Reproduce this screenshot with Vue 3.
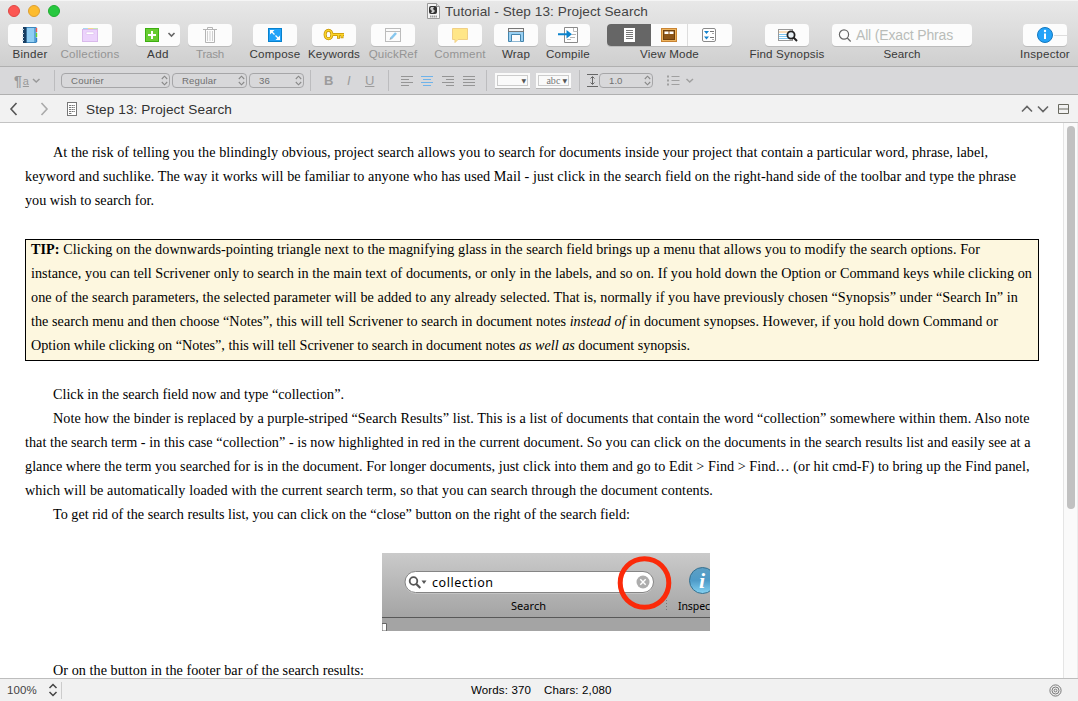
<script setup>
// Tracks a text run so that it spans a given width.
const vFit = {
  mounted(el, { value }) {
    if (!value) return
    const w = el.getBoundingClientRect().width
    el.style.letterSpacing = (value - w) / el.textContent.length + 'px'
  }
}

const tools = [
  { id: 'binder', label: 'Binder', gap: 8, w: 44, lw: 35 },
  { id: 'collections', label: 'Collections', gap: 16, w: 44, lw: 59, off: true },
  { id: 'add', label: 'Add', gap: 24, w: 44, lw: 22 },
  { id: 'trash', label: 'Trash', gap: 8, w: 44, lw: 28, off: true },
  { id: 'compose', label: 'Compose', gap: 21, w: 44, lw: 51 },
  { id: 'keywords', label: 'Keywords', gap: 15, w: 44, lw: 52 },
  { id: 'quickref', label: 'QuickRef', gap: 15, w: 44, lw: 48.5, off: true },
  { id: 'comment', label: 'Comment', gap: 23, w: 44, lw: 51.5, off: true },
  { id: 'wrap', label: 'Wrap', gap: 12, w: 44, lw: 28 },
  { id: 'compile', label: 'Compile', gap: 8, w: 44, lw: 44 },
  { id: 'view', label: 'View Mode', gap: 17, w: 125, lw: 59 },
  { id: 'find', label: 'Find Synopsis', gap: 33, w: 44, lw: 75 },
  { id: 'search', label: 'Search', gap: 23, w: 140, lw: 37 },
  { id: 'inspector', label: 'Inspector', gap: 51, w: 44, lw: 50 }
]

const intro = [
  { t: 'At the risk of telling you the blindingly obvious, project search allows you to search for documents inside your project that contain a particular word, phrase, label,', w: 935, indent: true },
  { t: 'keyword and suchlike. The way it works will be familiar to anyone who has used Mail - just click in the search field on the right-hand side of the toolbar and type the phrase', w: 991 },
  { t: 'you wish to search for.', w: 129 }
]
const tip = [
  { b: 'TIP:', t: ' Clicking on the downwards-pointing triangle next to the magnifying glass in the search field brings up a menu that allows you to modify the search options. For', w: 949 },
  { t: 'instance, you can tell Scrivener only to search in the main text of documents, or only in the labels, and so on. If you hold down the Option or Command keys while clicking on', w: 1001 },
  { t: 'one of the search parameters, the selected parameter will be added to any already selected. That is, normally if you have previously chosen “Synopsis” under “Search In” in', w: 987 },
  { t: 'the search menu and then choose “Notes”, this will tell Scrivener to search in document notes ', i: 'instead of', e: ' in document synopses. However, if you hold down Command or', w: 967 },
  { t: 'Option while clicking on “Notes”, this will tell Scrivener to search in document notes ', i: 'as well as', e: ' document synopsis.', w: 659 }
]
const rest = [
  { t: 'Click in the search field now and type “collection”.', w: 291, indent: true },
  { t: 'Note how the binder is replaced by a purple-striped “Search Results” list. This is a list of documents that contain the word “collection” somewhere within them. Also note', w: 976.5, indent: true },
  { t: 'that the search term - in this case “collection” - is now highlighted in red in the current document. So you can click on the documents in the search results list and easily see at a', w: 1005.5 },
  { t: 'glance where the term you searched for is in the document. For longer documents, just click into them and go to Edit > Find > Find… (or hit cmd-F) to bring up the Find panel,', w: 1004.5 },
  { t: 'which will be automatically loaded with the current search term, so that you can search through the document contents.', w: 688 },
  { t: 'To get rid of the search results list, you can click on the “close” button on the right of the search field:', w: 577, indent: true }
]
const aligns = [
  { gap: 12, rows: [[0, 12], [0, 8], [0, 12], [0, 8]] },
  { gap: 8, on: true, rows: [[0, 12], [2, 10], [0, 12], [2, 10]] },
  { gap: 9, rows: [[0, 12], [4, 12], [0, 12], [4, 12]] },
  { gap: 9, rows: [[0, 12], [0, 12], [0, 12], [0, 12]] }
]
const rowY = [0.5, 3.5, 6.5, 9.5]
</script>

<template>
  <div class="window">
    <header class="top">
      <div class="titlebar">
        <div class="lights"><i class="red"></i><i class="amber"></i><i class="green"></i></div>
        <div class="title">
          <svg width="13" height="16" viewBox="0 0 13 16">
            <path d="M.5.5h9l3 3v12H.5z" fill="#f5f5f5" stroke="#999" />
            <path d="M9.500 .5v3h3" fill="#ddd" stroke="#999" />
            <rect x="2" y="3" width="8" height="8" rx="2" fill="#333" />
            <path d="M4 4h3l-1 2 2 2-2 2H4l1-2-2-2z" fill="#ccc" />
            <path d="M3 13.500h7" stroke="#999" stroke-dasharray="1.500 .5" stroke-width="2" />
          </svg>
          <span v-fit="203">Tutorial - Step 13: Project Search</span>
        </div>
      </div>
      <div class="toolbar">
        <div v-for="t in tools" :key="t.id" class="tool" :class="{ off: t.off }" :style="{ marginLeft: t.gap + 'px', width: t.w + 'px' }">
          <div class="btn">
            <svg v-if="t.id === 'binder'" width="44" height="22">
              <rect x="18" y="3.500" width="10" height="15" fill="#8fcdf3" stroke="#3d86bd" />
              <rect x="26" y="4" width="2" height="14" fill="#5ea6da" />
              <rect x="15" y="3" width="3.500" height="16" fill="#173e63" />
              <path d="M14 5.500h2M14 9.500h2M14 13.500h2M14 16.500h2" stroke="#c9d5df" />
              <path d="M28.500 4v4" stroke="#f25a50" stroke-width="1.400" /><path d="M28.500 9v4" stroke="#6bd32c" stroke-width="1.400" /><path d="M28.500 14v4" stroke="#3582c6" stroke-width="1.400" />
            </svg>
            <svg v-else-if="t.id === 'collections'" width="44" height="22">
              <path d="M15 4.500h5" stroke="#a8d8ee" /><path d="M20 4.500h5" stroke="#f6d58e" /><path d="M25 4.500h5" stroke="#c4e8b8" />
              <rect x="14.500" y="5.500" width="15" height="12" fill="#ecd3fc" stroke="#d9b9eb" />
              <rect x="18" y="8" width="8" height="2.500" rx="1" fill="#fff" stroke="#d9b9eb" stroke-width=".6" />
            </svg>
            <svg v-else-if="t.id === 'add'" width="44" height="22">
              <rect x="9.500" y="4.500" width="13" height="13" fill="#67cc31" stroke="#3dae12" />
              <path d="M16 7v8M12 11h8" stroke="#fff" stroke-width="2" />
              <path d="M32.500 9l3 3 3-3" fill="none" stroke="#666" stroke-width="1.600" />
            </svg>
            <svg v-else-if="t.id === 'trash'" width="44" height="22" fill="none" stroke="#b4b4b4">
              <path d="M15 5.500h14M19.500 5V3.500h5V5M17.500 6v12.500h9V6" />
              <path d="M19.500 7v10M22 7v10M24.500 7v10" stroke="#cfcfcf" />
            </svg>
            <svg v-else-if="t.id === 'compose'" width="44" height="22">
              <rect x="15.500" y="4.500" width="13" height="13" fill="#22a2f8" stroke="#0781cd" />
              <path d="M18 7l3.500 3.500M22.500 11.500L26 15" stroke="#fff" stroke-width="1.300" />
              <path d="M17 6h4.500L17 10.500zM27 16h-4.500L27 11.500z" fill="#fff" />
            </svg>
            <svg v-else-if="t.id === 'keywords'" width="44" height="22">
              <path d="M20.500 10.500H32M26.500 11v3.700M30 11v3.200" fill="none" stroke="#c39204" stroke-width="3" />
              <ellipse cx="16.500" cy="10.500" rx="3.400" ry="4.200" fill="none" stroke="#c39204" stroke-width="3" />
              <ellipse cx="16.500" cy="10.500" rx="3.400" ry="4.200" fill="none" stroke="#fbd42a" stroke-width="1.600" />
              <path d="M20 10.500H32M26.500 11v3M30 11v2.500" fill="none" stroke="#fbd42a" stroke-width="1.500" />
            </svg>
            <svg v-else-if="t.id === 'quickref'" width="44" height="22">
              <rect x="14.500" y="4.500" width="15" height="13" fill="#fbfbfb" stroke="#bcbcbc" />
              <path d="M15 7.500h14" stroke="#bcbcbc" />
              <path d="M20 14.500l5-5.500" stroke="#86c7ef" stroke-width="2.600" /><path d="M18.500 16l.8-2.500 1.700 1.500z" fill="#9aa9b5" />
            </svg>
            <svg v-else-if="t.id === 'comment'" width="44" height="22">
              <path d="M14.500 4.500h15v11H20l-3 3v-3h-2.500z" fill="#ffe688" stroke="#f0cf85" />
            </svg>
            <svg v-else-if="t.id === 'wrap'" width="44" height="22">
              <path d="M14.500 7.500v10h3v-7h9v7h3v-10z" fill="#9ad0f2" stroke="#4485ad" />
              <path d="M18 17.500h8" stroke="#8fb8d4" />
              <rect x="14.500" y="4.500" width="15" height="3" fill="#f4f4f4" stroke="#777" />
            </svg>
            <svg v-else-if="t.id === 'compile'" width="44" height="22">
              <path d="M18.500 3.500h13v15h-13z" fill="#fff" stroke="#8a8a8a" /><path d="M27.500 4v3.500h4" fill="none" stroke="#bbb" />
              <path d="M26 10.500h4M24 13.500h5M21 15.500h4" stroke="#b5b5b5" />
              <path d="M12 10.200h11" stroke="#0b83cd" stroke-width="2" /><path d="M20.500 6l5.500 4.200-5.500 4.200z" fill="#0b83cd" />
            </svg>
            <svg v-else-if="t.id === 'view'" width="125" height="22">
              <rect width="44" height="22" fill="#666" />
              <path d="M80.500 0v22" stroke="#ddd" />
              <rect x="17" y="4" width="11" height="14" fill="#fff" />
              <path d="M19 6.500h7M19 8.500h7M19 10.500h7M19 12.500h7M19 14.500h7" stroke="#777" />
              <rect x="54.500" y="4.500" width="15" height="13" fill="#eeb45f" stroke="#c88434" />
              <rect x="56.500" y="6.500" width="11" height="9" fill="#8d5518" stroke="#6e3f0d" />
              <path d="M57.500 7.500h4v2.500h-4zM62.500 7.500h4v2.500h-4z" fill="#fff" />
              <rect x="95.500" y="4.500" width="13" height="13" rx="1.500" fill="#fff" stroke="#8a8a8a" />
              <path d="M97 7h5l-2.500 3zM97 12.500h5l-2.500 3z" fill="#1684ce" />
              <path d="M103 7.500h4M103 13.500h4" stroke="#777" /><path d="M105 9.500h2M105 15.500h2" stroke="#aaa" />
            </svg>
            <svg v-else-if="t.id === 'find'" width="44" height="22">
              <rect x="13.500" y="5.500" width="14" height="11" fill="#fff" stroke="#999" />
              <path d="M14 8h12" stroke="#f0bc7a" /><path d="M14 10.500h9M14 12.500h9M14 14.500h10" stroke="#7fc6ef" />
              <circle cx="26" cy="11" r="3.600" fill="#e8f0f5" stroke="#222" stroke-width="1.800" />
              <path d="M28.500 13.500l3.500 3.500" stroke="#222" stroke-width="2" />
            </svg>
            <template v-else-if="t.id === 'search'">
              <svg width="24" height="22" fill="none" stroke="#666" stroke-width="1.200"><circle cx="12" cy="10.500" r="4.600" /><path d="M15.300 14l3.400 3.500" /></svg>
              <span v-fit="97" class="placeholder">All (Exact Phras</span>
            </template>
            <svg v-else width="44" height="22">
              <path d="M31 11.500h13" stroke="#ddd" />
              <circle cx="22" cy="11" r="7.500" fill="#24a3f8" stroke="#1478bf" />
              <path d="M22 9.500V15" stroke="#fff" stroke-width="2" /><circle cx="22" cy="7" r="1.200" fill="#fff" />
            </svg>
          </div>
          <div class="label"><span v-fit="t.lw">{{ t.label }}</span></div>
        </div>
      </div>
    </header>

    <div class="format">
      <div class="para"><b>¶</b><u>a</u>
        <svg width="9" height="6"><path d="M1 1l3.200 3L7.500 1" fill="none" stroke="#999" stroke-width="1.500" /></svg>
      </div>
      <i class="rule"></i>
      <div class="select family"><span v-fit="33">Courier</span><svg width="7" height="11"><path d="M.8 4L3.500 1.200 6.200 4M.8 7l2.700 2.800L6.200 7" /></svg></div>
      <div class="select face"><span v-fit="34.500">Regular</span><svg width="7" height="11"><path d="M.8 4L3.500 1.200 6.200 4M.8 7l2.700 2.800L6.200 7" /></svg></div>
      <div class="select size"><span v-fit="11">36</span><svg width="7" height="11"><path d="M.8 4L3.500 1.200 6.200 4M.8 7l2.700 2.800L6.200 7" /></svg></div>
      <i class="rule after-size"></i>
      <div class="styles"><b>B</b><em>I</em><u>U</u></div>
      <i class="rule"></i>
      <svg v-for="(a, n) in aligns" :key="n" width="12" height="10" :style="{ marginLeft: a.gap + 'px' }">
        <path v-for="(r, k) in a.rows" :key="k" :d="`M${r[0]} ${rowY[k]}H${r[1]}`" :stroke="a.on ? '#6fb3ea' : '#959595'" />
      </svg>
      <i class="rule after-align"></i>
      <div class="well first"><div><small>▼</small></div></div>
      <div class="well"><div><span v-fit="14">abc</span><small>▼</small></div></div>
      <i class="rule after-wells"></i>
      <svg class="leading" width="12" height="14" fill="none" stroke="#666"><path d="M0 .5h11M0 12.500h11M5.500 3v7M3.500 4.500l2-2 2 2M3.500 8.500l2 2 2-2" /></svg>
      <div class="select space"><span v-fit="13.500">1.0</span><svg width="7" height="11"><path d="M.8 4L3.500 1.200 6.200 4M.8 7l2.700 2.800L6.200 7" /></svg></div>
      <svg class="list" width="28" height="12" fill="none" stroke="#a0a0a0"><path d="M0 1.500h2M0 5.500h2M0 9.500h2" stroke-width="2" /><path d="M4.500 1.500h8M4.500 5.500h8M4.500 9.500h8" /><path d="M19.500 4l3.200 3L26 4" stroke-width="1.500" /></svg>
    </div>

    <nav class="nav">
      <svg width="85" height="27" fill="none">
        <path d="M16.500 8L11 14l5.500 6" stroke="#555" stroke-width="1.600" />
        <path d="M41.500 8l5.500 6-5.500 6" stroke="#aaa" stroke-width="1.600" />
        <rect x="67.500" y="7.500" width="9" height="13" fill="#fff" stroke="#777" />
        <path d="M69 10.500h6M69 12.500h6M69 14.500h6M69 16.500h6M69 18.500h3" stroke="#777" stroke-dasharray="2 .6" />
      </svg>
      <span v-fit="146" class="doc">Step 13: Project Search</span>
      <svg class="right" width="60" height="27" fill="none" stroke="#666">
        <path d="M4 16.500L9 11.500l5 5M20 11.500l5 5 5-5" stroke-width="1.600" />
        <path d="M40.500 9.500h10v9h-10zM40 14h11" stroke="#6a6a60" />
      </svg>
    </nav>

    <main class="body">
      <article class="page">
        <p v-for="l in intro" :key="l.t" :class="{ indent: l.indent }"><span v-fit="l.w">{{ l.t }}</span></p>
        <section class="tip">
          <p v-for="l in tip" :key="l.t"><span v-fit="l.w"><b v-if="l.b">{{ l.b }}</b>{{ l.t }}<em v-if="l.i">{{ l.i }}</em>{{ l.e }}</span></p>
        </section>
        <p v-for="l in rest" :key="l.t" :class="{ indent: l.indent }"><span v-fit="l.w">{{ l.t }}</span></p>
        <svg class="figure" width="328" height="78" viewBox="0 0 328 78">
          <defs>
            <linearGradient id="metal" x2="0" y2="1"><stop stop-color="#cacaca" /><stop offset=".8" stop-color="#a5a5a5" /><stop offset="1" stop-color="#9e9e9e" /></linearGradient>
            <linearGradient id="orb" x2="0" y2="1"><stop stop-color="#5d9fc4" /><stop offset=".5" stop-color="#4e9bc8" /><stop offset="1" stop-color="#85d2f2" /></linearGradient>
          </defs>
          <rect width="328" height="78" fill="url(#metal)" />
          <rect x="0" y="65" width="328" height="13" fill="#a4a4a4" />
          <path d="M0 64.500h328" stroke="#585858" />
          <rect x="23" y="19.500" width="248.500" height="21" rx="10.500" fill="#d5d5d5" />
          <rect x="23" y="18.500" width="248.500" height="21" rx="10.500" fill="#fff" stroke="#858585" />
          <circle cx="31.500" cy="28" r="3.800" fill="none" stroke="#555" stroke-width="1.800" /><path d="M34.300 31l4 4" stroke="#555" stroke-width="2.200" />
          <path d="M39.500 27.500h5l-2.500 3.500z" fill="#555" />
          <text x="50" y="34" textLength="61" font-size="12.500">collection</text>
          <text x="129" y="57" textLength="35" font-size="11">Search</text>
          <text x="296" y="57" textLength="32" font-size="10.500">Inspec</text>
          <path d="M284.500 47v12" stroke="#777" stroke-dasharray="1 2" />
          <circle cx="320.500" cy="27.500" r="13" fill="url(#orb)" stroke="#35708f" />
          <text class="info" x="317" y="35" font-size="22">i</text>
          <circle cx="261" cy="29" r="6.500" fill="#adadad" /><path d="M258.300 26.300l5.400 5.400M263.700 26.300l-5.400 5.400" stroke="#fff" stroke-width="1.400" />
          <circle cx="262.500" cy="30" r="24.300" fill="none" stroke="#fb2a0a" stroke-width="5" />
          <path d="M0 70.500h4.500V78H0z" fill="#fff" stroke="#666" />
        </svg>
        <p class="indent last"><span v-fit="311">Or on the button in the footer bar of the search results:</span></p>
      </article>
      <aside class="scroll"><i></i></aside>
    </main>

    <footer class="footer">
      <span v-fit="30" class="zoom">100%</span>
      <svg width="10" height="14" fill="none" stroke="#444" stroke-width="1.500"><path d="M1.500 5L5 1.500 8.500 5M1.500 9L5 12.500 8.500 9" /></svg>
      <i class="sep"></i>
      <span v-fit="60" class="words">Words: 370</span><span v-fit="67.500" class="chars">Chars: 2,080</span>
      <svg class="target" width="13" height="13" fill="none" stroke="#777"><circle cx="6.500" cy="6.500" r="5.600" /><circle cx="6.500" cy="6.500" r="3.500" /><circle cx="6.500" cy="6.500" r="1.400" /></svg>
    </footer>
  </div>
</template>

<style>
body { margin: 0; overflow: hidden; }
</style>

<style scoped>
* { box-sizing: border-box; }
.window { width: 1078px; height: 701px; display: flex; flex-direction: column; background: #fff; font-family: "Liberation Sans", Arial, sans-serif; white-space: nowrap; overflow: hidden; }
svg { display: block; flex: none; }
span { display: inline-block; white-space: pre; }
.top { height: 67px; flex: none; background: linear-gradient(#e8e8e8, #cfcfcf); border-top: 1px solid #f5f5f5; border-bottom: 1px solid #b0b0b0; }
.titlebar { height: 23px; display: flex; }
.lights { display: flex; gap: 8px; padding: 4px 0 0 8px; width: 427px; flex: none; }
.lights i { width: 12px; height: 12px; border-radius: 50%; }
.red { background: #fc5753; border: 1px solid #df4744; }
.amber { background: #fdbc2e; border: 1px solid #de9f30; }
.green { background: #27c83f; border: 1px solid #1fac30; }
.title { display: flex; gap: 5px; padding-top: 2px; font-size: 13.6px; line-height: 17px; color: #444; }
.toolbar { display: flex; }
.tool { flex: none; }
.btn { height: 22px; background: #fcfcfc; border-radius: 4px; box-shadow: 0 1px 0 #bcbcbc; overflow: hidden; display: flex; }
.label { display: flex; justify-content: center; font-size: 11.6px; line-height: 15px; color: #393939; }
.off .label { color: #949494; }
.placeholder { font-size: 14px; line-height: 23px; color: #b9bcb9; }
.format { height: 28px; flex: none; display: flex; align-items: center; background: #d8d8da; border-bottom: 1px solid #b0b0b0; }
.rule { width: 1px; height: 21px; background: #bcbcbe; flex: none; }
.para { width: 54px; padding-left: 14px; display: flex; align-items: center; color: #999; }
.para b { font: 700 14px "Liberation Sans", sans-serif; }
.para u { font-size: 11px; margin-left: 1px; }
.para svg { margin-left: 3px; }
.select { height: 15px; border: 1px solid #a6a6a8; border-radius: 4px; display: flex; align-items: center; justify-content: space-between; padding: 0 1px 0 9px; font-size: 9.6px; color: #707070; flex: none; }
.select svg { fill: none; stroke: #888; stroke-width: 1.1; }
.family { width: 109px; margin-left: 6px; }
.face { width: 75px; margin-left: 2px; }
.size { width: 55px; margin-left: 2px; }
.space { width: 54px; }
.after-size { margin-left: 6px; }
.styles { width: 77px; padding-left: 13px; display: flex; color: #9c9c9c; font-size: 13px; line-height: 15px; }
.styles b { width: 23px; }
.styles em { width: 18px; }
.after-align { margin-left: 11px; }
.well { width: 35px; height: 15px; background: #fafafa; padding: 2px; margin-left: 6px; box-shadow: 0 1px 0 #b5b5b5; flex: none; }
.well.first { margin-left: 8px; }
.well div { height: 11px; border: 1px solid #ccc; display: flex; justify-content: flex-end; align-items: center; gap: 2px; font: 10px/9px "Liberation Serif", serif; color: #777; padding-right: 1px; }
.well small { font: 6px/9px "DejaVu Sans", sans-serif; color: #555; }
.after-wells { margin-left: 8px; }
.leading { margin-left: 7px; }
.list { margin-left: 14px; }
.nav { height: 28px; flex: none; display: flex; background: #f2f2f2; border-bottom: 1px solid #c3c3c3; }
.doc { font-size: 13.6px; line-height: 29px; color: #333; margin-left: 1px; }
.right { margin-left: auto; }
.body { height: 555px; flex: none; display: flex; overflow: hidden; }
.page { flex: 1; padding: 17px 0 0 25px; font: 14.2px/24px "Liberation Serif", "Times New Roman", serif; color: #000; overflow: hidden; }
p { margin: 0; height: 24px; }
.indent { padding-left: 28px; }
.tip { width: 1014px; height: 122px; margin: 27px 0 21px; border: 1px solid #000; background: #fdf7df; padding-left: 5px; }
.tip p:first-child { margin-top: -3px; }
.figure { margin: 27px 0 0 357px; font-family: "Noto Sans", "Open Sans", sans-serif; }
.info { font-family: "Liberation Serif", serif; font-style: italic; font-weight: 700; fill: #fff; }
.last { margin-top: 27px; }
.scroll { width: 15px; background: #fafafa; border-left: 1px solid #e5e5e5; border-right: 1px solid #ececec; padding: 3px 0 0 3px; flex: none; }
.scroll i { display: block; width: 8px; height: 383px; border-radius: 4px; background: #c1c1c1; }
.footer { height: 23px; flex: none; border-top: 1px solid #bdbdbd; background: #f1f1f1; display: flex; align-items: center; font-size: 11.5px; color: #000; }
.zoom { margin: 0 11px 0 7px; color: #444; }
.sep { width: 1px; height: 17px; background: #ccc; margin-left: 3px; }
.words { margin-left: 409px; }
.chars { margin-left: 13px; }
.target { margin: 0 16px 0 auto; }
</style>
